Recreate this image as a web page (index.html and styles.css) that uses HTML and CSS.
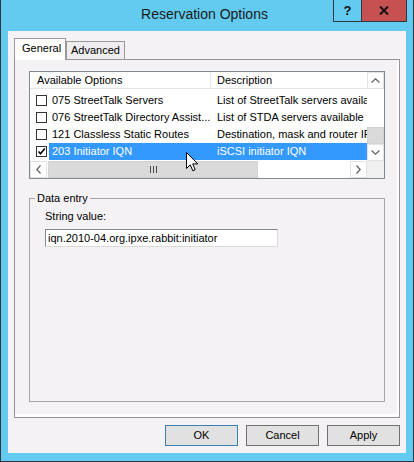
FILE: index.html
```html
<!DOCTYPE html>
<html lang="en">
<head>
  <meta charset="UTF-8" />
  <title>Reservation Options</title>
  <link rel="stylesheet" href="styles.css">
</head>
<body>
  <div class="window">
    <div class="titlebar">
      <span></span>
      <div class="title">Reservation Options</div>
      <div class="caption-btns">
        <div class="cap help">?</div>
        <div class="cap close">
          <svg viewBox="0 0 10 9" width="10" height="9">
            <path d="M1 0.5L9 8.5M9 0.5L1 8.5" stroke="#111" stroke-width="2" />
          </svg>
        </div>
      </div>
    </div>

    <div class="client">
      <div class="tabs">
        <div class="tab active">General</div>
        <div class="tab">Advanced</div>
      </div>

      <div class="panel">
        <div class="listview">
          <div class="lv-view">
            <div class="lv-head">
              <div class="col1">Available Options</div>
              <div class="col2">Description</div>
            </div>
            <div class="lv-rows">
              <div class="lv-row">
                <span class="check"></span>
                <div class="lv-sel">
                  <span class="col1">075 StreetTalk Servers</span>
                  <span class="col2">List of StreetTalk servers available to the client</span>
                </div>
              </div>
              <div class="lv-row">
                <span class="check"></span>
                <div class="lv-sel">
                  <span class="col1">076 StreetTalk Directory Assist...</span>
                  <span class="col2">List of STDA servers available to the client</span>
                </div>
              </div>
              <div class="lv-row">
                <span class="check"></span>
                <div class="lv-sel">
                  <span class="col1">121 Classless Static Routes</span>
                  <span class="col2">Destination, mask and router IP addresses</span>
                </div>
              </div>
              <div class="lv-row selected">
                <span class="check checked">
                  <svg viewBox="0 0 9 9" width="9" height="9">
                    <path d="M1.5 4.5L3.5 6.8L7.8 1.5" fill="none" stroke="#000" stroke-width="1.6" />
                  </svg>
                </span>
                <div class="lv-sel">
                  <span class="col1">203 Initiator IQN</span>
                  <span class="col2">iSCSI initiator IQN</span>
                </div>
              </div>
            </div>
          </div>

          <div class="vscroll">
            <div class="sb-btn">
              <svg viewBox="0 0 9 5" width="9" height="5"><polyline points="0.5,4.5 4.5,0.8 8.5,4.5" fill="none" stroke="#606060" stroke-width="1.2" /></svg>
            </div>
            <div class="sb-track"></div>
            <div class="sb-thumb"></div>
            <div class="sb-btn">
              <svg viewBox="0 0 9 5" width="9" height="5"><polyline points="0.5,0.5 4.5,4.2 8.5,0.5" fill="none" stroke="#606060" stroke-width="1.2" /></svg>
            </div>
          </div>

          <div class="hscroll">
            <div class="sb-btn">
              <svg viewBox="0 0 5 9" width="5" height="9"><polyline points="4.5,0.5 0.8,4.5 4.5,8.5" fill="none" stroke="#606060" stroke-width="1.2" /></svg>
            </div>
            <div class="sb-thumb hthumb"><span class="grip"></span><span class="grip"></span><span class="grip"></span></div>
            <div class="sb-track"></div>
            <div class="sb-btn">
              <svg viewBox="0 0 5 9" width="5" height="9"><polyline points="0.5,0.5 4.2,4.5 0.5,8.5" fill="none" stroke="#606060" stroke-width="1.2" /></svg>
            </div>
          </div>

          <div class="corner"></div>
        </div>

        <fieldset class="group">
          <legend>Data entry</legend>
          <div class="field-label">String value:</div>
          <div class="textbox">iqn.2010-04.org.ipxe.rabbit:initiator</div>
        </fieldset>
      </div>

      <div class="buttons">
        <div class="btn default">OK</div>
        <div class="btn">Cancel</div>
        <div class="btn">Apply</div>
      </div>
    </div>

    <!-- mouse pointer -->
    <svg class="cursor" viewBox="0 0 13 20" width="13" height="20">
      <path d="M0.5 0.5L0.5 16.5L4.3 12.8L6.8 18.8L9.2 17.8L6.7 11.9L11.8 11.9Z" fill="#fff" stroke="#000" stroke-width="1" stroke-linejoin="miter" />
    </svg>
  </div>
</body>
</html>
```

FILE: styles.css
```css
html, body {
  margin: 0;
  padding: 0;
  background: #62cbef;
}
.window {
  position: relative;
  width: 414px;
  height: 462px;
  box-sizing: border-box;
  background: #62cbef;
  border: 1px solid #2e3a40;
  border-top: none;
  display: flex;
  flex-direction: column;
  font-family: "Liberation Sans", Arial, sans-serif;
  font-size: 11px;
  color: #000;
}
.titlebar {
  height: 31px;
  display: grid;
  grid-template-columns: 1fr auto 1fr;
  align-items: start;
  padding-right: 6px;
}
.title {
  font-size: 14px;
  line-height: 29px;
  color: #1b1b1b;
  padding-left: 1px;
}
.caption-btns {
  justify-self: end;
  display: flex;
  border: 1px solid #2e3a40;
  border-top: none;
  height: 21px;
}
.cap {
  height: 21px;
  display: flex;
  align-items: center;
  justify-content: center;
}
.help {
  width: 27px;
  font-weight: bold;
  font-size: 13px;
  color: #111;
}
.close {
  width: 44px;
  background: #c75050;
  border-left: 1px solid #2e3a40;
}
.client {
  flex: 1;
  margin: 0 7px 8px 7px;
  background: #f5f2f5;
  padding: 7px 6px 7px 6px;
  display: flex;
  flex-direction: column;
}
.tabs {
  display: flex;
  align-items: flex-end;
  height: 21px;
}
.tab {
  box-sizing: border-box;
  border: 1px solid #9a9a9a;
  border-bottom: none;
  position: relative;
}
.tab.active {
  width: 52px;
  height: 22px;
  margin-bottom: -1px;
  background: #fff;
  padding: 3px 0 0 7px;
  z-index: 1;
}
.tab:not(.active) {
  width: 59px;
  height: 18px;
  background: #efedef;
  padding: 2px 0 0 4px;
}
.panel {
  flex: 1;
  border: 1px solid #949494;
  box-shadow: inset -2px -3px 0 #fff;
  padding: 11px 14px 0 14px;
  display: flex;
  flex-direction: column;
}
.listview {
  height: 108px;
  box-sizing: border-box;
  border: 1px solid #828790;
  background: #fff;
  display: grid;
  grid-template-columns: 1fr 17px;
  grid-template-rows: 1fr 17px;
}
.lv-view {
  overflow: hidden;
  white-space: nowrap;
}
.lv-head {
  display: flex;
  height: 17px;
  box-sizing: border-box;
  border-bottom: 1px solid #e5e5e5;
  line-height: 16px;
}
.lv-head .col1 {
  width: 180px;
  flex: none;
  border-right: 1px solid #e5e5e5;
  padding-left: 7px;
  box-sizing: border-box;
  width: 181px;
}
.lv-head .col2 {
  padding-left: 6px;
}
.lv-rows {
  padding-top: 3px;
}
.lv-row {
  display: flex;
  align-items: center;
  height: 17px;
  line-height: 17px;
}
.check {
  flex: none;
  width: 11px;
  height: 11px;
  box-sizing: border-box;
  border: 1px solid #333;
  background: #fff;
  margin-left: 6px;
  display: flex;
  align-items: center;
  justify-content: center;
}
.lv-sel {
  flex: 1;
  min-width: 0;
  display: flex;
  margin-left: 2px;
}
.lv-sel .col1 {
  flex: none;
  width: 161px;
  padding-left: 3px;
  box-sizing: border-box;
  overflow: hidden;
}
.lv-sel .col2 {
  padding-left: 7px;
  overflow: hidden;
}
.lv-row.selected .lv-sel {
  background: #3399ff;
  color: #fff;
}
.vscroll {
  display: flex;
  flex-direction: column;
  background: #fff;
}
.hscroll {
  display: flex;
  background: #fff;
}
.sb-btn {
  flex: none;
  width: 17px;
  height: 17px;
  box-sizing: border-box;
  border: 1px solid #e3e3e3;
  background: #fff;
  display: flex;
  align-items: center;
  justify-content: center;
}
.sb-track {
  flex: 1;
}
.sb-thumb {
  flex: none;
  height: 17px;
  box-sizing: border-box;
  background: #dadada;
  border: 1px solid #d2d2d2;
}
.hthumb {
  width: 210px;
  height: 17px;
  display: flex;
  align-items: center;
  justify-content: center;
  gap: 2px;
  margin-left: 1px;
}
.grip {
  width: 1px;
  height: 7px;
  background: #4d4d4d;
}
.corner {
  background: #f0f0f0;
}
.group {
  margin: 13px 0 0 0;
  height: 210px;
  box-sizing: border-box;
  border: 1px solid #a7a7a7;
  padding: 3px 15px 0 15px;
  min-width: 0;
}
.group legend {
  margin-left: -10px;
  padding: 0 2px;
  line-height: 13px;
}
.field-label {
  line-height: 13px;
  margin-top: 2px;
}
.textbox {
  margin-top: 6px;
  width: 233px;
  height: 18px;
  box-sizing: border-box;
  background: #fff;
  border: 1px solid #dadada;
  border-top-color: #828790;
  border-left-color: #828790;
  padding-left: 2px;
  line-height: 16px;
}
.buttons {
  display: flex;
  justify-content: flex-end;
  gap: 8px;
  margin-top: 7px;
}
.btn {
  width: 73px;
  height: 21px;
  box-sizing: border-box;
  background: #e1e1e1;
  border: 1px solid #707070;
  text-align: center;
  line-height: 19px;
}
.btn.default {
  border-color: #3c7fb1;
}
.cursor {
  position: absolute;
  left: 185px;
  top: 152px;
}
```
